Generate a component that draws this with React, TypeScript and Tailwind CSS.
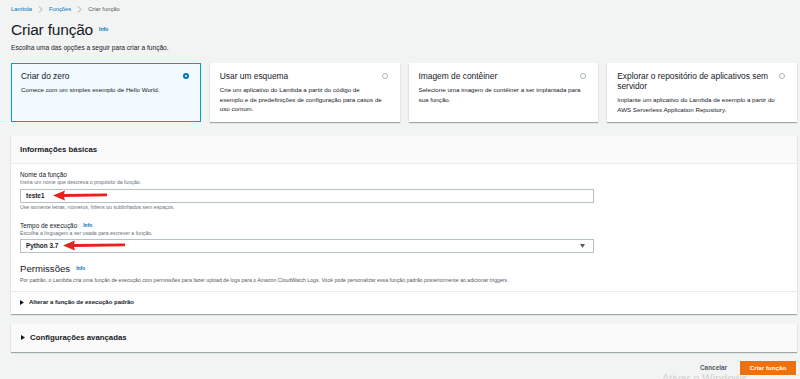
const font = { fontFamily: '"Liberation Sans", Arial, sans-serif' }

const cards = [
  {
    title: "Criar do zero",
    desc: "Comece com um simples exemplo de Hello World.",
    selected: true,
  },
  {
    title: "Usar um esquema",
    desc: "Crie um aplicativo do Lambda a partir do código de exemplo e de predefinições de configuração para casos de uso comum.",
    selected: false,
  },
  {
    title: "Imagem de contêiner",
    desc: "Selecione uma imagem de contêiner a ser implantada para sua função.",
    selected: false,
  },
  {
    title: "Explorar o repositório de aplicativos sem servidor",
    desc: "Implante um aplicativo do Lambda de exemplo a partir do AWS Serverless Application Repository.",
    selected: false,
  },
]

const Info = () => (
  <span className="ml-[6px] text-[5px] font-bold text-[#0073bb] align-middle">Info</span>
)

// red annotation arrow pointing left
const Arrow = ({ width }: { width: number }) => (
  <svg width={width} height="11" viewBox={`0 0 ${width} 11`} className="block">
    <path d={`M0 5.5 L12 0.5 L11 4 L${width} 3.6 L${width} 6.2 L11 7 L12 10.5 Z`} fill="#e8211c" />
  </svg>
)

const Chevron = () => (
  <svg width="5" height="7" viewBox="0 0 5 7" className="mx-[6px]">
    <path d="M1 0.5 L4 3.5 L1 6.5" fill="none" stroke="#879596" strokeWidth="0.8" />
  </svg>
)

const App = () => {
  return (
    <div style={font} className="relative h-[379px] w-[800px] overflow-hidden bg-[#f2f3f3] pl-[11px] pr-[3px] text-[#16191f]">
      {/* breadcrumb */}
      <div className="flex h-[17px] items-center pt-[1px] text-[5.8px]">
        <span className="text-[#0073bb]">Lambda</span>
        <Chevron />
        <span className="text-[#0073bb]">Funções</span>
        <Chevron />
        <span className="text-[#545b64]">Criar função</span>
      </div>

      <div className="mt-[4px] flex h-[18px] items-center">
        <h1 className="text-[15.5px] font-light leading-[18px] tracking-[-0.2px]">Criar função</h1>
        <Info />
      </div>

      <p className="mt-[4px] text-[6.6px] leading-[9px]">Escolha uma das opções a seguir para criar a função.</p>

      {/* option cards */}
      <div className="mt-[11px] grid grid-cols-4 gap-[9px]">
        {cards.map((c) => (
          <div
            key={c.title}
            className={
              c.selected
                ? "h-[59px] border border-[#00a1c9] bg-[#f1faff] px-[9px] pt-[7px]"
                : "h-[59px] bg-white px-[10px] pt-[8px] shadow-[0_1px_1px_0_rgba(0,28,36,0.35)]"
            }
          >
            <div className="flex items-start justify-between gap-[6px]">
              <div className="flex-1 text-[8.4px] leading-[10px]">{c.title}</div>
              {c.selected ? (
                <span className="mr-[2px] mt-[2px] h-[6px] w-[6px] shrink-0 rounded-full border-[2px] border-[#0073bb] bg-white" />
              ) : (
                <span className="mr-[2px] mt-[2px] h-[6px] w-[6px] shrink-0 rounded-full border border-[#aab7b8] bg-white" />
              )}
            </div>
            <p className="mt-[4px] pr-[6px] text-[6.2px] leading-[9.5px] text-[#16191f]">{c.desc}</p>
          </div>
        ))}
      </div>

      {/* basic info panel */}
      <div className="mt-[14px] bg-white shadow-[0_1px_1px_0_rgba(0,28,36,0.35)]">
        <div className="flex h-[28px] items-center border-b border-[#eaeded] bg-[#fafafa] px-[9px]">
          <h2 className="text-[7.8px] font-bold">Informações básicas</h2>
        </div>
        <div className="px-[9px] pt-[6px]">
          <div className="text-[6.4px] leading-[9px]">Nome da função</div>
          <div className="text-[5.2px] leading-[7px] text-[#687078]">Insira um nome que descreva o propósito da função.</div>
          <div className="relative mt-[3px] flex h-[14px] w-[574px] items-center border border-[#b6c1c2] bg-white px-[5px]">
            <span className="text-[6.4px] font-bold">teste1</span>
            <div className="absolute left-[32px] top-[0px]">
              <Arrow width={54} />
            </div>
          </div>
          <div className="mt-[1px] text-[5.2px] leading-[7px] text-[#687078]">Use somente letras, números, hífens ou sublinhados sem espaços.</div>

          <div className="mt-[10px] flex items-center text-[6.4px] leading-[9px]">
            Tempo de execução
            <span className="ml-[6px] text-[5px] font-bold text-[#0073bb]">Info</span>
          </div>
          <div className="text-[5.2px] leading-[7px] text-[#687078]">Escolha a linguagem a ser usada para escrever a função.</div>
          <div className="relative mt-[1.5px] flex h-[14px] w-[574px] items-center justify-between border border-[#b6c1c2] bg-white px-[5px]">
            <span className="text-[6.4px] font-bold">Python 3.7</span>
            <svg width="5" height="4" viewBox="0 0 5 4" className="mr-[3px]">
              <path d="M0 0 L5 0 L2.5 4 Z" fill="#545b64" />
            </svg>
            <div className="absolute left-[42px] top-[0px]">
              <Arrow width={62} />
            </div>
          </div>

          <div className="mt-[10px] flex items-center">
            <h3 className="text-[9.6px] font-light leading-[12px]">Permissões</h3>
            <Info />
          </div>
          <p className="mt-[2px] text-[5.2px] leading-[7px] text-[#545b64]">
            Por padrão, o Lambda cria uma função de execução com permissões para fazer upload de logs para o Amazon CloudWatch Logs. Você pode personalizar essa função padrão posteriormente ao adicionar triggers.
          </p>
        </div>
        <div className="mt-[7px] flex h-[23px] items-center border-t border-[#eaeded] px-[9px]">
          <svg width="4" height="5" viewBox="0 0 4 5">
            <path d="M0 0 L4 2.5 L0 5 Z" fill="#16191f" />
          </svg>
          <span className="ml-[5px] text-[6px] font-bold text-[#16191f]">Alterar a função de execução padrão</span>
        </div>
      </div>

      {/* advanced settings */}
      <div className="mt-[10px] flex h-[28px] items-center bg-[#fafafa] px-[10px] shadow-[0_1px_1px_0_rgba(0,28,36,0.35)]">
        <svg width="4" height="5" viewBox="0 0 4 5">
          <path d="M0 0 L4 2.5 L0 5 Z" fill="#16191f" />
        </svg>
        <span className="ml-[5px] text-[7.8px] font-bold">Configurações avançadas</span>
      </div>

      {/* footer buttons */}
      <div className="mt-[9px] flex items-center justify-end">
        <span className="text-[6.4px] font-bold text-[#545b64]">Cancelar</span>
        <button className="ml-[13px] mr-[1px] flex h-[14px] w-[56px] items-center justify-center bg-[#ec7211] text-[6.2px] font-bold text-white">
          Criar função
        </button>
      </div>

      <div className="pointer-events-none absolute left-[662px] top-[373px] text-[11px] leading-[11px] text-[#d2d2d2]">Ativar o Windows</div>
    </div>
  )
}

export default App
